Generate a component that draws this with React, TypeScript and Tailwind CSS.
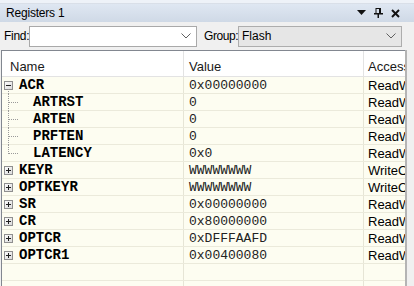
import React from "react";

type Row = {
  name: string;
  value: string;
  access: string;
  kind: "open" | "closed" | "child" | "lastchild" | "empty";
};

const rows: Row[] = [
  { name: "ACR", value: "0x00000000", access: "ReadWrite", kind: "open" },
  { name: "ARTRST", value: "0", access: "ReadWrite", kind: "child" },
  { name: "ARTEN", value: "0", access: "ReadWrite", kind: "child" },
  { name: "PRFTEN", value: "0", access: "ReadWrite", kind: "child" },
  { name: "LATENCY", value: "0x0", access: "ReadWrite", kind: "lastchild" },
  { name: "KEYR", value: "WWWWWWWW", access: "WriteOnly", kind: "closed" },
  { name: "OPTKEYR", value: "WWWWWWWW", access: "WriteOnly", kind: "closed" },
  { name: "SR", value: "0x00000000", access: "ReadWrite", kind: "closed" },
  { name: "CR", value: "0x80000000", access: "ReadWrite", kind: "closed" },
  { name: "OPTCR", value: "0xDFFFAAFD", access: "ReadWrite", kind: "closed" },
  { name: "OPTCR1", value: "0x00400080", access: "ReadWrite", kind: "closed" },
  { name: "", value: "", access: "", kind: "empty" },
  { name: "", value: "", access: "", kind: "empty" },
];

function ExpandBox({ open }: { open: boolean }) {
  return (
    <svg width="9" height="9" viewBox="0 0 9 9" className="shrink-0">
      <defs>
        <linearGradient id="bx" x1="0" y1="0" x2="1" y2="1">
          <stop offset="0" stopColor="#ffffff" />
          <stop offset="1" stopColor="#d8d8d8" />
        </linearGradient>
      </defs>
      <rect x="0.5" y="0.5" width="8" height="8" fill="url(#bx)" stroke="#8f8f8f" />
      <line x1="2" y1="4.5" x2="7" y2="4.5" stroke="#202020" />
      {!open && <line x1="4.5" y1="2" x2="4.5" y2="7" stroke="#202020" />}
    </svg>
  );
}

function NameCell({ row }: { row: Row }) {
  if (row.kind === "empty") return <div className="h-full" />;
  if (row.kind === "open" || row.kind === "closed") {
    return (
      <div className="relative h-full flex items-center pl-[2px]">
        <ExpandBox open={row.kind === "open"} />
        {row.kind === "open" && (
          <svg width="9" height="5" className="absolute left-[2px] bottom-[-1px]">
            <line x1="4.5" y1="0" x2="4.5" y2="5" stroke="#9a9a9a" strokeDasharray="1 1" />
          </svg>
        )}
        <span className="ml-[6px] font-['Liberation_Mono',monospace] font-bold text-[14px] leading-none">
          {row.name}
        </span>
      </div>
    );
  }
  const last = row.kind === "lastchild";
  return (
    <div className="h-full flex items-center">
      <svg width="31" height="17" className="shrink-0 self-start">
        <line
          x1="6.5"
          y1="0"
          x2="6.5"
          y2={last ? 9 : 17}
          stroke="#9a9a9a"
          strokeDasharray="1 1"
        />
        <line x1="7" y1="8.5" x2="16" y2="8.5" stroke="#9a9a9a" strokeDasharray="1 1" />
      </svg>
      <span className="font-['Liberation_Mono',monospace] font-bold text-[14px] leading-none">
        {row.name}
      </span>
    </div>
  );
}

function Chevron() {
  return (
    <svg width="10" height="6" viewBox="0 0 10 6">
      <polyline points="0.5,0.5 5,5 9.5,0.5" fill="none" stroke="#606060" strokeWidth="1" />
    </svg>
  );
}

export default function App() {
  return (
    <div className="w-[414px] h-[286px] overflow-hidden bg-[#f0f0f0] flex flex-col font-['Liberation_Sans',Arial,sans-serif] text-[12px] text-black">
      {/* top strip */}
      <div className="h-[4px] bg-[#eef2f8] border-b border-[#d9dfe8]" />
      {/* title bar */}
      <div className="h-[18px] flex items-center bg-gradient-to-b from-[#dfe7f2] to-[#cfd9e6] pl-[6px] pr-[14px]">
        <span className="text-[12px] leading-none tracking-[-0.2px]">Registers 1</span>
        <div className="ml-auto flex items-center gap-[8px]">
          <svg width="9" height="6" viewBox="0 0 9 6">
            <polygon points="0,0 9,0 4.5,5" fill="#111" />
          </svg>
          <svg width="9" height="10" viewBox="0 0 9 10">
            <rect x="2" y="0.5" width="4" height="5" fill="none" stroke="#111" />
            <rect x="5" y="0" width="2" height="6" fill="#111" />
            <rect x="0" y="5" width="9" height="1.5" fill="#111" />
            <rect x="3.5" y="6" width="1.5" height="4" fill="#111" />
          </svg>
          <svg width="9" height="9" viewBox="0 0 9 9">
            <line x1="1" y1="1" x2="8" y2="8" stroke="#111" strokeWidth="2" />
            <line x1="8" y1="1" x2="1" y2="8" stroke="#111" strokeWidth="2" />
          </svg>
        </div>
      </div>
      {/* find row */}
      <div className="h-[28px] flex items-center pl-[4px]">
        <span className="w-[25px] whitespace-nowrap tracking-[-0.3px]">Find:</span>
        <div className="w-[168px] h-[21px] bg-white border border-[#a9a9a9] flex items-center justify-end pr-[5px]">
          <Chevron />
        </div>
        <span className="ml-[7px] w-[34px] whitespace-nowrap tracking-[-0.4px]">Group:</span>
        <div className="w-[164px] h-[21px] bg-[#e6e6e6] border border-[#adadad] flex items-center pl-[3px] pr-[5px]">
          <span>Flash</span>
          <span className="ml-auto">
            <Chevron />
          </span>
        </div>
      </div>
      {/* table + side */}
      <div className="flex flex-1 min-h-0">
        <div className="w-[404px] border-t border-l border-[#828790] bg-[#fdfdf1] flex flex-col overflow-hidden ml-[1px]">
          <div className="h-[26px] shrink-0 flex bg-white border-b border-[#e3e3e3] text-[13px] text-[#1a1a1a]">
            <div className="w-[182px] border-r border-[#e3e3e3] pl-[8px] pt-[6px]">Name</div>
            <div className="w-[180px] border-r border-[#e3e3e3] pl-[5px] pt-[6px]">Value</div>
            <div className="flex-1 pl-[4px] pt-[6px] whitespace-nowrap overflow-hidden">Access</div>
          </div>
          {rows.map((r, i) => (
            <div key={i} className="h-[17px] shrink-0 flex border-b border-[#ebeadb]">
              <div className="w-[182px] border-r border-[#e6e5d6]">
                <NameCell row={r} />
              </div>
              <div className="w-[180px] border-r border-[#e6e5d6] pl-[5px] flex items-center font-['Liberation_Mono',monospace] text-[13px] text-[#222] leading-none">
                {r.value}
              </div>
              <div className="flex-1 pl-[4px] flex items-center whitespace-nowrap overflow-hidden text-[13px] leading-none">
                {r.access}
              </div>
            </div>
          ))}
        </div>
        <div className="flex-1 border-l-2 border-[#b4b4b4] bg-[#f0f0f0]" />
      </div>
    </div>
  );
}
